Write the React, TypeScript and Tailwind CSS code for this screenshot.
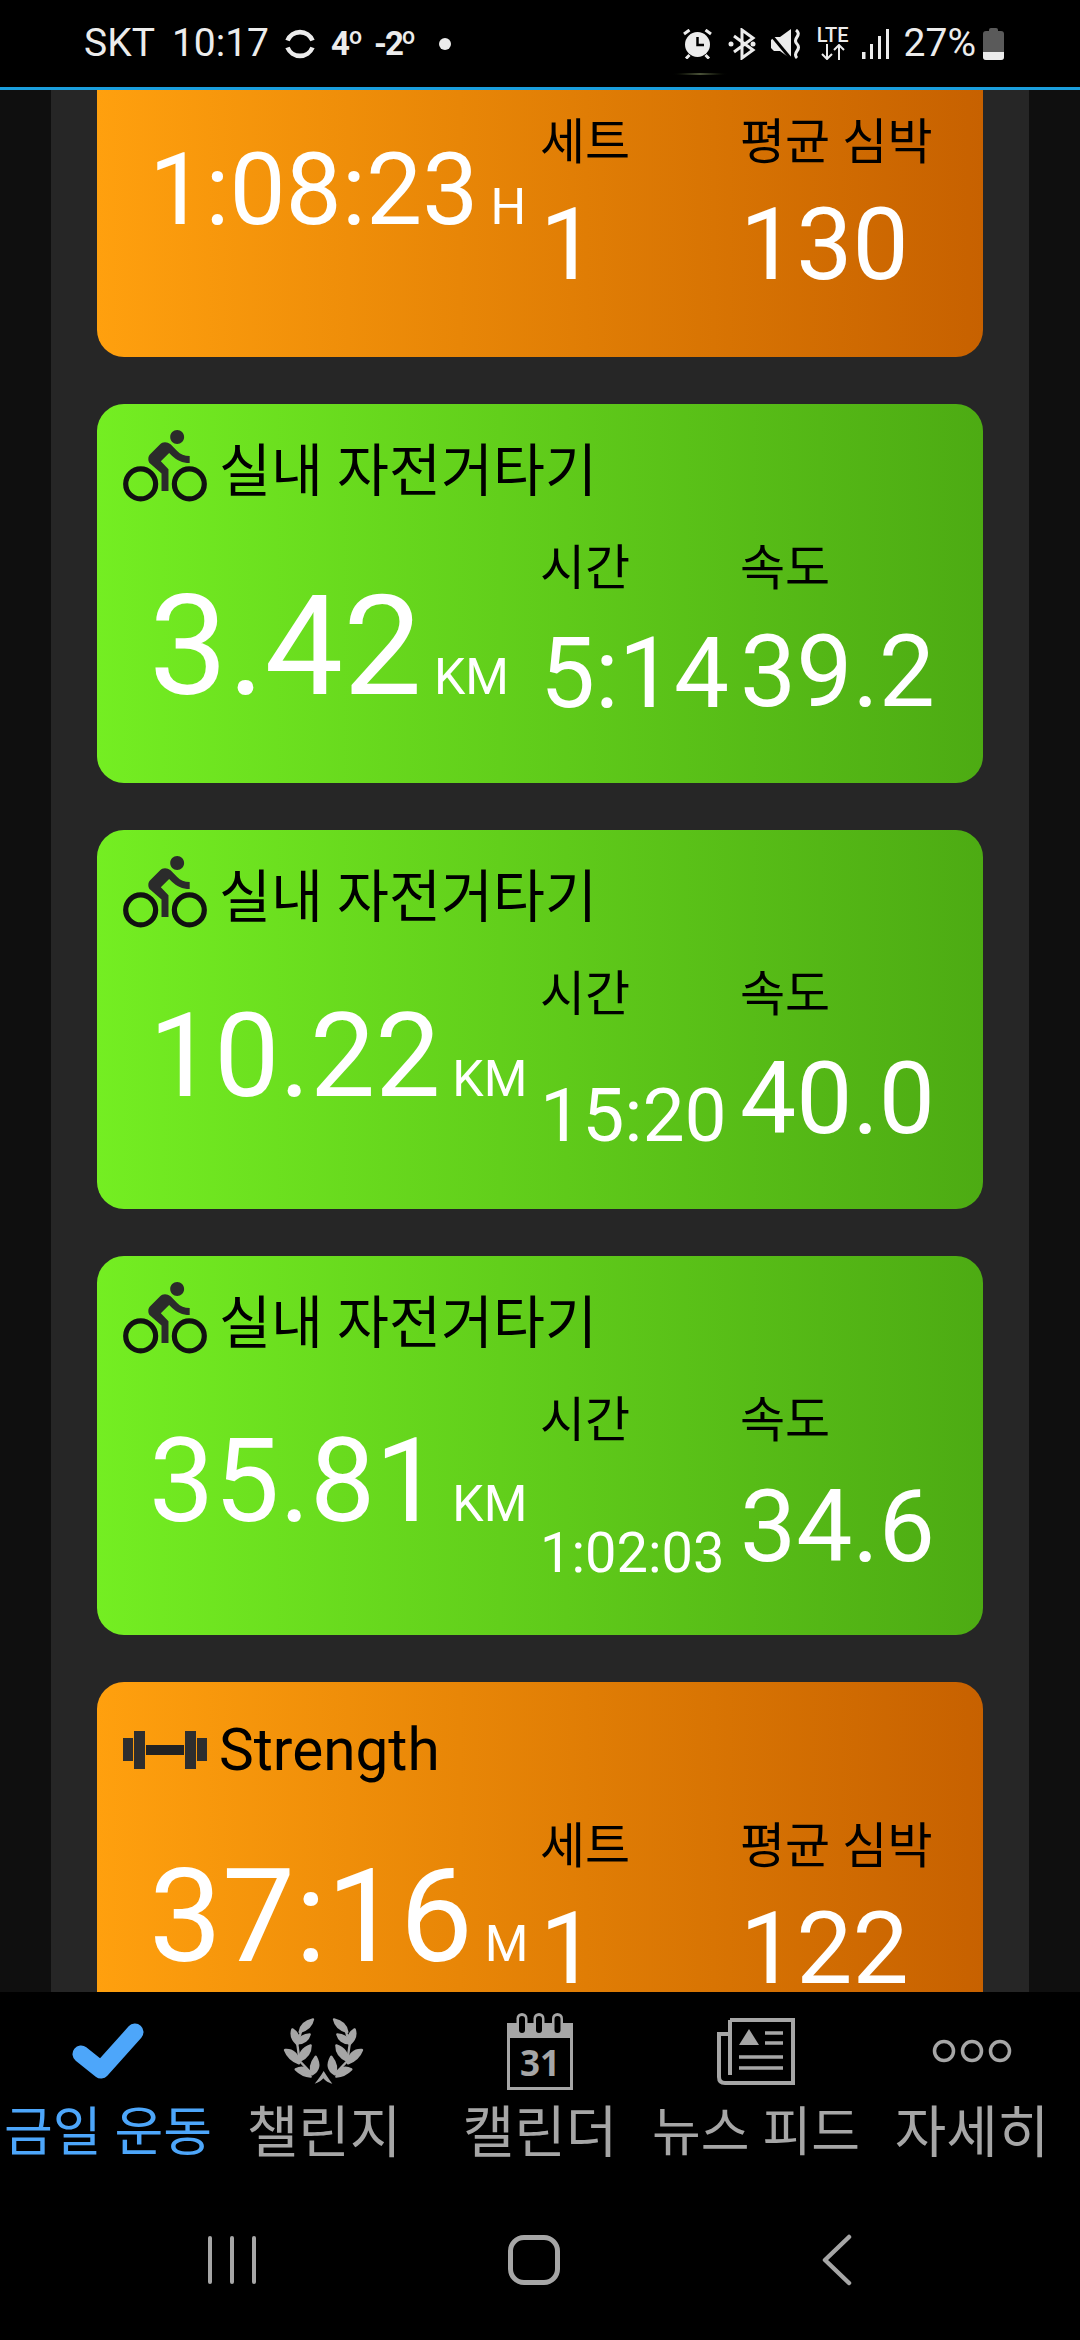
const fontStack = "font-['Roboto','Noto_Sans_CJK_KR',sans-serif]"

const BikeIcon = () => (
  <svg viewBox="0 1.2 24 21" className="w-[84px] h-[73px] shrink-0 mb-[14px]">
    <path
      fill="#2b2b2b"
      d="M15.5 5.500c1.100 0 2-.9 2-2s-.9-2-2-2-2 .9-2 2 .9 2 2 2zm-4.700 5l2.400-2.400.8.8c1.300 1.300 3 2.100 5.100 2.100V9c-1.500 0-2.700-.6-3.600-1.500l-1.900-1.900c-.5-.4-1-.6-1.600-.6s-1.100.2-1.400.6L7.800 8.400c-.4.4-.6.9-.6 1.400 0 .6.2 1.100.6 1.400L11 14v5h2v-6.200l-2.200-2.300z"
    />
    <circle cx="5" cy="17" r="4.300" fill="none" stroke="#111" strokeWidth="1.500" />
    <circle cx="19" cy="17" r="4.300" fill="none" stroke="#111" strokeWidth="1.500" />
  </svg>
)

const DumbbellIcon = () => (
  <svg viewBox="0 0 84 38" className="w-[84px] h-[38px] shrink-0">
    <rect x="0" y="7" width="10" height="23" fill="#2e2e2e" />
    <rect x="11" y="0" width="11" height="38" fill="#2e2e2e" />
    <rect x="23" y="14" width="38" height="10" fill="#222" />
    <rect x="62" y="0" width="11" height="38" fill="#2e2e2e" />
    <rect x="74" y="7" width="10" height="23" fill="#2e2e2e" />
  </svg>
)

const cards = [
  {
    gradient: "from-[#ffa00e] to-[#c76100]",
    icon: null,
    title: "",
    titleClass: "text-[56px]",
    value: "1:08:23",
    valueClass: "text-[100px] mt-[54px]",
    unit: "H",
    label1: "세트",
    second: "1",
    secondClass: "text-[100px] mt-[29px]",
    label2: "평균 심박",
    third: "130",
    thirdClass: "mt-[29px]",
  },
  {
    gradient: "from-[#74ee22] to-[#4dab13]",
    icon: "bike",
    title: "실내 자전거타기",
    titleClass: "text-[56.5px]",
    value: "3.42",
    valueClass: "text-[140px] mt-[64px]",
    unit: "KM",
    label1: "시간",
    second: "5:14",
    secondClass: "text-[98px] mt-[33px]",
    label2: "속도",
    third: "39.2",
    thirdClass: "mt-[30px]",
  },
  {
    gradient: "from-[#74ee22] to-[#4dab13]",
    icon: "bike",
    title: "실내 자전거타기",
    titleClass: "text-[56.5px]",
    value: "10.22",
    valueClass: "text-[116px] mt-[60px]",
    unit: "KM",
    label1: "시간",
    second: "15:20",
    secondClass: "text-[75px] mt-[60px]",
    label2: "속도",
    third: "40.0",
    thirdClass: "mt-[31px]",
  },
  {
    gradient: "from-[#74ee22] to-[#4dab13]",
    icon: "bike",
    title: "실내 자전거타기",
    titleClass: "text-[56.5px]",
    value: "35.81",
    valueClass: "text-[116px] mt-[59px]",
    unit: "KM",
    label1: "시간",
    second: "1:02:03",
    secondClass: "text-[56px] mt-[81px]",
    label2: "속도",
    third: "34.6",
    thirdClass: "mt-[33px]",
  },
  {
    gradient: "from-[#ffa00e] to-[#c76100]",
    icon: "dumbbell",
    title: "Strength",
    titleClass: "text-[58.5px]",
    value: "37:16",
    valueClass: "text-[130px] mt-[62px]",
    unit: "M",
    label1: "세트",
    second: "1",
    secondClass: "text-[100px] mt-[29px]",
    label2: "평균 심박",
    third: "122",
    thirdClass: "mt-[29px]",
  },
]

const WorkoutCard = ({ card }: { card: (typeof cards)[number] }) => (
  <div className={`h-[379px] mb-[47px] shrink-0 rounded-[27px] overflow-hidden bg-gradient-to-r ${card.gradient}`}>
    <div className="h-[108px] pt-[28px] pl-[26px]">
      <div className="h-[80px] flex items-center gap-[12px]">
        {card.icon === "bike" && <BikeIcon />}
        {card.icon === "dumbbell" && <DumbbellIcon />}
        <span className={`leading-none text-black ${card.titleClass}`}>{card.title}</span>
      </div>
    </div>
    <div className="flex text-white">
      <div className="w-[443px] pl-[52px] flex items-baseline gap-[12px]">
        <span className={`leading-none ${card.valueClass}`}>{card.value}</span>
        <span className="text-[50px] leading-none">{card.unit}</span>
      </div>
      <div className="w-[200px]">
        <div className="mt-[34px] h-[46px] text-[49px] leading-[46px] text-black">{card.label1}</div>
        <div className={`leading-none whitespace-nowrap ${card.secondClass}`}>{card.second}</div>
      </div>
      <div className="flex-1">
        <div className="mt-[34px] h-[46px] text-[49px] leading-[46px] text-black whitespace-nowrap">{card.label2}</div>
        <div className={`text-[100px] leading-none ${card.thirdClass}`}>{card.third}</div>
      </div>
    </div>
  </div>
)

const StatusBar = () => (
  <div className="h-[90px] shrink-0 bg-black border-b-[3px] border-[#1b9fdd] relative">
    <div className="h-full flex items-center justify-between pl-[84px] pr-[76px] text-[39px] leading-none text-[#ececec]">
      <div className="flex items-center">
        <span>SKT</span>
        <span className="ml-[17px]">10:17</span>
        <svg viewBox="0 0 32 32" className="w-[32px] h-[32px] ml-[15px]" fill="none" stroke="#ececec" strokeWidth="4.600">
          <path d="M3.500 12.500A13.500 13.500 0 0 1 28.500 12.500" />
          <path d="M3.500 19.500A13.500 13.500 0 0 0 28.500 19.500" />
        </svg>
        <span className="ml-[15px] text-[33px] font-bold tracking-[-1px]">4<sup className="text-[23px] font-medium">o</sup></span>
        <span className="ml-[13px] text-[33px] font-bold tracking-[-2px]">-2<sup className="text-[23px] font-medium">o</sup></span>
        <span className="ml-[26px] w-[12px] h-[12px] rounded-full bg-[#ececec]" />
      </div>
      <div className="flex items-center">
        <svg viewBox="0 0 29 30" className="w-[29px] h-[30px]" fill="#ececec">
          <circle cx="14.500" cy="15.500" r="12.500" />
          <path d="M1 5L6.500 1M28 5L22.500 1M6.500 26L3 29.500M22.500 26L26 29.500" fill="none" stroke="#ececec" strokeWidth="3" />
          <path d="M14.500 8V16H21" fill="none" stroke="#000" strokeWidth="2.500" />
        </svg>
        <svg viewBox="0 0 28 32" className="w-[28px] h-[32px] ml-[16px]" fill="none" stroke="#ececec" strokeWidth="3">
          <path d="M6 8L25 22L14 30V2L25 10L6 24" />
          <circle cx="3" cy="16" r="2.500" fill="#ececec" stroke="none" />
          <circle cx="25" cy="16" r="2.500" fill="#ececec" stroke="none" />
        </svg>
        <svg viewBox="0 0 30 30" className="w-[30px] h-[30px] ml-[15px]">
          <path d="M0 11L3 8H9L20 0V30L9 22H3L0 19z" fill="#ececec" />
          <path d="M0 6L20 30" stroke="#000" strokeWidth="3" />
          <path d="M25 1Q29 4 26 8T26 15T26 22T26 29" fill="none" stroke="#ececec" strokeWidth="3" />
        </svg>
        <div className="ml-[16px] w-[32px] flex flex-col items-center text-[20px] font-medium leading-[17px]">
          <span>LTE</span>
          <svg viewBox="0 0 24 16" className="w-[24px] h-[16px]" fill="none" stroke="#ececec" strokeWidth="2">
            <path d="M6 0v15M1 10l5 5 5-5M18 16V1M13 6l5-5 5 5" />
          </svg>
        </div>
        <svg viewBox="0 0 27 30" className="w-[27px] h-[30px] ml-[13px]" fill="#ececec">
          <rect x="0" y="23" width="3.500" height="7" />
          <rect x="8" y="15" width="3" height="15" />
          <rect x="16" y="7" width="3" height="23" />
          <rect x="24" y="0" width="3" height="30" />
        </svg>
        <span className="ml-[15px]">27%</span>
        <div className="ml-[7px] w-[21px] h-[32px] flex flex-col items-center">
          <div className="w-[9px] h-[3px] bg-[#5a5a5a] rounded-t-[2px]" />
          <div className="w-[21px] flex-1 rounded-[3px] overflow-hidden bg-[#5a5a5a] flex flex-col justify-end">
            <div className="h-[8px] bg-[#ececec]" />
          </div>
        </div>
      </div>
    </div>
    <div className="absolute left-[670px] top-[73px] w-[60px] h-[2px] rounded-full bg-gradient-to-r from-black via-[#4a5238] to-black" />
  </div>
)

const CheckIcon = () => (
  <svg viewBox="0 0 72 56" className="w-[72px] h-[56px]" fill="none" stroke="#4da6fa" strokeWidth="17" strokeLinecap="round" strokeLinejoin="round">
    <path d="M9 31L29 47L63 9" />
  </svg>
)

const leaves = [
  "M92 78C95 55 110 45 132 40C128 60 115 72 92 78Z",
  "M85 115C68 100 65 85 70 70C85 80 95 95 85 115Z",
  "M85 112C90 95 105 85 122 85C118 100 105 112 85 112Z",
  "M90 172C70 165 55 150 48 132C70 130 90 145 90 172Z",
  "M92 165C90 140 105 125 125 118C125 140 115 155 92 165Z",
  "M125 212C105 210 90 200 80 190C100 180 120 185 125 212Z",
  "M130 205C120 185 130 165 140 152C150 170 155 190 130 205Z",
]

const LaurelHalf = () => (
  <g stroke="#a6a6a6" strokeWidth="7" strokeLinejoin="round">
    {leaves.map((d) => <path key={d} d={d} />)}
    <path d="M98 70L85 115L92 165L130 205" fill="none" />
  </g>
)

const LaurelIcon = () => (
  <svg viewBox="0 0 330 270" className="w-[110px] h-[90px]" fill="#a6a6a6">
    <LaurelHalf />
    <g transform="translate(327 0) scale(-1 1)">
      <LaurelHalf />
    </g>
    <path d="M164 195C174 212 182 222 190 233C175 230 168 222 163 217C158 222 150 230 137 233C148 220 155 210 164 195Z" />
  </svg>
)

const CalendarIcon = () => (
  <svg viewBox="0 0 66 77" className="w-[66px] h-[77px]">
    <rect x="0" y="10" width="66" height="67" fill="#a6a6a6" />
    <rect x="3" y="25" width="60" height="49" fill="#000" />
    {[9.500, 26.500, 45].map((x) => (
      <g key={x}>
        <rect x={x} y="0" width="11" height="22" rx="5.500" fill="#a6a6a6" />
        <rect x={x + 2.500} y="3" width="6" height="17" rx="3" fill="#000" />
      </g>
    ))}
    <text x="33" y="63" textAnchor="middle" fontSize="35" fontWeight="700" fill="#a6a6a6" fontFamily="'Open Sans',sans-serif">31</text>
  </svg>
)

const NewsIcon = () => (
  <svg viewBox="0 0 78 67" className="w-[78px] h-[67px]" fill="none" stroke="#a6a6a6" strokeWidth="4">
    <path d="M13 2H76V65H8Q2 65 2 59V16H13M13 2V57" />
    <path d="M32 11L42 27H22Z" fill="#a6a6a6" stroke="none" />
    <path d="M48 15H66M48 25H66M22 39H66M22 50H66" strokeWidth="3.500" />
  </svg>
)

const DotsIcon = () => (
  <svg viewBox="0 0 80 24" className="w-[80px] h-[24px]" fill="none" stroke="#a6a6a6" strokeWidth="3.500">
    {[12, 40, 68].map((cx) => <circle key={cx} cx={cx} cy="12" r="9.500" />)}
  </svg>
)

const tabs = [
  { label: "금일 운동", icon: <CheckIcon />, size: "text-[53px]", active: true },
  { label: "챌린지", icon: <LaurelIcon />, size: "text-[56px]", active: false },
  { label: "캘린더", icon: <CalendarIcon />, size: "text-[56px]", active: false },
  { label: "뉴스 피드", icon: <NewsIcon />, size: "text-[53px]", active: false },
  { label: "자세히", icon: <DotsIcon />, size: "text-[56px]", active: false },
]

const BottomNav = () => (
  <div className="h-[348px] shrink-0 bg-black">
    <div className="grid grid-cols-5 pt-[14px]">
      {tabs.map((tab) => (
        <div key={tab.label} className="flex flex-col items-center">
          <div className="h-[90px] flex items-center justify-center">{tab.icon}</div>
          <span className={`mt-[12px] leading-[50px] whitespace-nowrap ${tab.size} ${tab.active ? "text-[#4da6fa]" : "text-[#a6a6a6]"}`}>
            {tab.label}
          </span>
        </div>
      ))}
    </div>
    <div className="mt-[76px] pl-[208px] flex items-center">
      <div className="flex gap-[18px] w-[48px]">
        <div className="w-[4px] h-[48px] shrink-0 rounded-full bg-[#a6a6a6]" />
        <div className="w-[4px] h-[48px] shrink-0 rounded-full bg-[#a6a6a6]" />
        <div className="w-[4px] h-[48px] shrink-0 rounded-full bg-[#a6a6a6]" />
      </div>
      <div className="ml-[252px] w-[52px] h-[50px] rounded-[16px] border-[5px] border-[#a6a6a6]" />
      <svg viewBox="0 0 30 52" className="ml-[262px] w-[30px] h-[52px]" fill="none" stroke="#a6a6a6" strokeWidth="4.500" strokeLinecap="round" strokeLinejoin="round">
        <path d="M27 3L3 26L27 49" />
      </svg>
    </div>
  </div>
)

const App = () => {
  return (
    <div className={`w-[1080px] h-[2340px] flex flex-col overflow-hidden bg-black ${fontStack}`}>
      <StatusBar />
      <div className="flex-1 min-h-0 bg-[#0f0f0f] px-[51px] overflow-hidden">
        <div className="h-full bg-[#262626] px-[46px] overflow-hidden">
          <div className="-mt-[112px]">
            {cards.map((card, i) => <WorkoutCard key={i} card={card} />)}
          </div>
        </div>
      </div>
      <BottomNav />
    </div>
  )
}

export default App
